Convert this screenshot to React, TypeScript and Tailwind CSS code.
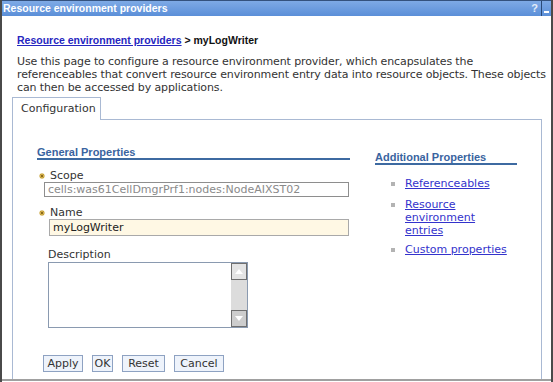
import React from "react";

const font = { fontFamily: '"DejaVu Sans", Verdana, sans-serif' };
const boldFont = { fontFamily: '"Liberation Sans", Arial, sans-serif' };

function Star() {
  return (
    <svg width="6" height="6" viewBox="0 0 6 6" className="mr-[5px] shrink-0">
      <path d="M3 0 L3 6 M0 3 L6 3 M1 1 L5 5 M5 1 L1 5" stroke="#c8a030" strokeWidth="1.1" />
      <circle cx="3" cy="3" r="1" fill="#7a5a10" />
    </svg>
  );
}

function LinkItem({ lines, mt }: { lines: string[]; mt: string }) {
  return (
    <div className={`flex items-start ${mt}`}>
      <div className="w-[4px] h-[4px] bg-[#b3b3b3] mt-[5px] ml-[16px] mr-[10px] shrink-0" />
      <a className="text-[#3333cc] underline leading-[13px]">
        {lines.map((l, i) => (
          <div key={i}>{l}</div>
        ))}
      </a>
    </div>
  );
}

function Btn({ children, w }: { children: React.ReactNode; w: string }) {
  return (
    <div className={`h-[17px] ${w} border border-[#8ea2c2] bg-[#eef3fb] flex items-center justify-center text-[#333] text-[11px] leading-none`}>
      {children}
    </div>
  );
}

export default function App() {
  return (
    <div
      style={font}
      className="w-[553px] h-[382px] overflow-hidden bg-white border-l-[2px] border-l-[#4a4a4a] border-r-[2px] border-r-[#4a4a4a] flex flex-col text-[11px] text-[#333]"
    >
      <div className="h-[16px] shrink-0 bg-gradient-to-b from-[#7eaae6] to-[#5b8fd8] border-t border-[#34527e] flex items-center justify-between pl-[1px]">
        <span style={boldFont} className="text-white font-bold text-[10.5px] leading-none">Resource environment providers</span>
        <div className="flex items-center h-full">
          <span style={boldFont} className="text-[#e3ecf9] font-bold text-[11px] pr-[3px]">?</span>
          <div className="h-full w-[10px] border-l border-[#2a4a78] flex items-end justify-center pb-[3px]">
            <div className="w-[5px] h-[2px] bg-white" />
          </div>
        </div>
      </div>

      <div className="flex-1 flex flex-col">
        <div style={boldFont} className="pl-[15px] pt-[18px] font-bold text-[10.5px] leading-[13px]">
          <a className="text-[#2626c0] underline">Resource environment providers</a>
          <span className="text-[#111]"> &gt; myLogWriter</span>
        </div>
        <div className="pl-[15px] pr-[1px] pt-[8px] leading-[13px] text-[#333] tracking-[-0.12px]">
          Use this page to configure a resource environment provider, which encapsulates the referenceables that convert resource environment entry data into resource objects. These objects can then be accessed by applications.
        </div>

        <div className="ml-[10px] mr-[9px] mt-[3px] flex-1 flex flex-col">
          <div className="flex">
            <div className="h-[23px] w-[89px] border border-b-0 border-[#a9b9d3] flex items-center pl-[8px] text-[#333]">
              Configuration
            </div>
            <div className="flex-1 border-b border-[#a9b9d3]" />
          </div>
          <div className="flex-1 border-l border-r border-[#a9b9d3] flex items-start pl-[24px] pt-[26px]">
            <div className="w-[313px] flex flex-col">
              <div style={boldFont} className="font-bold text-[11px] text-[#3a64a0] border-b-[2px] border-[#3d6aa1] leading-[12px]">General Properties</div>
              <div className="flex items-center mt-[9px] ml-[2px] leading-[13px]">
                <Star />
                Scope
              </div>
              <div className="ml-[7px] h-[15px] w-[305px] border border-[#8e8e8e] text-[#8a8a8a] pl-[3px] flex items-center leading-none">
                cells:was61CellDmgrPrf1:nodes:NodeAIXST02
              </div>
              <div className="flex items-center mt-[10px] ml-[2px] leading-[12px]">
                <Star />
                Name
              </div>
              <div className="ml-[12px] h-[17px] w-[300px] border border-[#a9a9a9] bg-[#fff8e4] text-[#222] pl-[3px] flex items-center leading-none">
                myLogWriter
              </div>
              <div className="ml-[11px] mt-[13px] leading-[12px]">Description</div>
              <div className="ml-[11px] mt-[1px] h-[66px] w-[200px] border border-[#8a9ab0] flex justify-end">
                <div className="w-[16px] h-full bg-[#dcdcdc] flex flex-col justify-between">
                  <div className="h-[17px] border border-[#6f6f6f] bg-[#e4e4e4] flex items-center justify-center">
                    <svg width="8" height="5" viewBox="0 0 8 5"><path d="M0 5 L4 0 L8 5 Z" fill="#fff" /></svg>
                  </div>
                  <div className="h-[17px] border border-[#6f6f6f] bg-[#cdcdcd] flex items-center justify-center">
                    <svg width="8" height="5" viewBox="0 0 8 5"><path d="M0 0 L4 5 L8 0 Z" fill="#fff" /></svg>
                  </div>
                </div>
              </div>
              <div className="flex gap-[9px] mt-[27px] ml-[6px]">
                <Btn w="w-[40px]">Apply</Btn>
                <Btn w="w-[21px]">OK</Btn>
                <Btn w="w-[43px]">Reset</Btn>
                <Btn w="w-[50px]">Cancel</Btn>
              </div>
            </div>
            <div className="ml-[25px] w-[142px] flex flex-col mt-[5px]">
              <div style={boldFont} className="font-bold text-[11px] text-[#3a64a0] border-b-[2px] border-[#3d6aa1] leading-[12px]">Additional Properties</div>
              <LinkItem mt="mt-[12px]" lines={["Referenceables"]} />
              <LinkItem mt="mt-[8px]" lines={["Resource", "environment", "entries"]} />
              <LinkItem mt="mt-[6px]" lines={["Custom properties"]} />
            </div>
          </div>
        </div>
        <div className="h-[2px] bg-[#a0a0a0] shrink-0 mb-[1px]" />
      </div>
    </div>
  );
}
